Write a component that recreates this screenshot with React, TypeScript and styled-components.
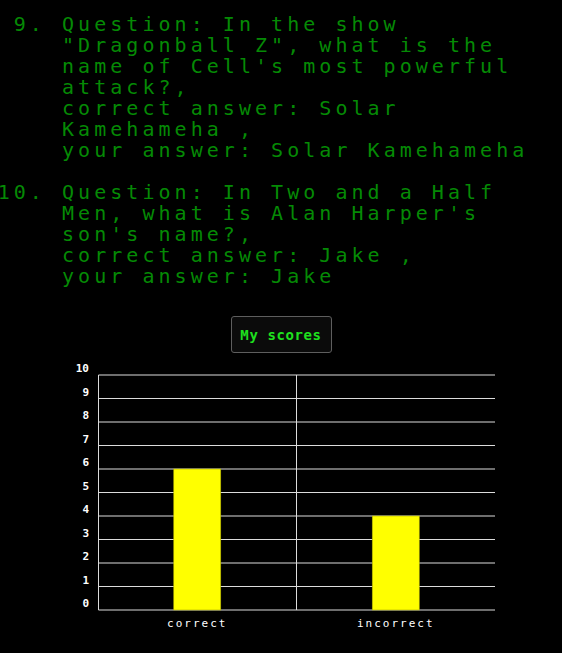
import styled, { createGlobalStyle } from 'styled-components'

const GlobalStyle = createGlobalStyle`
	html, body {
		margin: 0;
		padding: 0;
		background: #000;
	}
	body {
		font-family: 'DejaVu Sans Mono', 'Liberation Mono', monospace;
	}
`

const Page = styled.div`
	background: #000;
	min-height: 653px;
	display: flex;
	flex-direction: column;
	align-items: stretch;
`

const Results = styled.ol`
	margin: 14px 0 0;
	padding: 0 0 0 62px;
	color: #058a05;
	font-size: 20px;
	line-height: 21px;
	letter-spacing: 4.04px;
`

const Item = styled.li`
	margin-bottom: 21px;
	&:last-child {
		margin-bottom: 0;
	}
`

const ScoresButton = styled.button`
	align-self: center;
	margin-top: 29px;
	width: 101px;
	height: 37px;
	background: #0b0b0b;
	border: 1px solid #5e5e5e;
	border-radius: 3px;
	color: #1ee01e;
	font-family: 'DejaVu Sans Mono', monospace;
	font-weight: bold;
	font-size: 14px;
	letter-spacing: 0.6px;
	padding: 0;
	cursor: pointer;
`

const ChartBox = styled.div`
	margin-top: 7px;
	height: 280px;
	svg {
		display: block;
	}
`

interface Answer {
	question: string
	correct: string
	given: string
}

const answers: Answer[] = [
	{
		question: 'In the show "Dragonball Z", what is the name of Cell\'s most powerful attack?',
		correct: 'Solar Kamehameha',
		given: 'Solar Kamehameha',
	},
	{
		question: "In Two and a Half Men, what is Alan Harper's son's name?",
		correct: 'Jake',
		given: 'Jake',
	},
]

const scores = [
	{ label: 'correct', value: 6 },
	{ label: 'incorrect', value: 4 },
]

const Chart = () => {
	const top = 15
	const step = 23.5
	const left = 98.5
	const right = 495
	const bottom = top + step * 10
	const colW = (right - 98) / scores.length
	const ticks = Array.from({ length: 11 }, (_, i) => i)
	return (
		<svg width={562} height={280}>
			{ticks.map((t) => {
				const y = bottom - t * step
				return (
					<g key={t}>
						<line x1={left} x2={right} y1={y} y2={y} stroke="#dcdcdc" strokeWidth={1} />
						<text
							x={89}
							y={y - 3}
							textAnchor="end"
							fill="#fff"
							fontFamily="'DejaVu Sans Mono', monospace"
							fontWeight="bold"
							fontSize={11}
						>
							{t}
						</text>
					</g>
				)
			})}
			<line x1={left} x2={left} y1={top} y2={bottom} stroke="#dcdcdc" strokeWidth={1} />
			<line x1={296.5} x2={296.5} y1={top} y2={bottom} stroke="#dcdcdc" strokeWidth={1} />
			{scores.map((s, i) => {
				const cx = 98 + colW * i + colW / 2
				const h = s.value * step
				return (
					<g key={s.label}>
						<rect
							x={cx - 23.5}
							y={bottom - h}
							width={47}
							height={h}
							fill="#ffff00"
							stroke="#b0b000"
							strokeWidth={0.6}
						/>
						<text
							x={cx}
							y={267}
							textAnchor="middle"
							fill="#fff"
							fontFamily="'DejaVu Sans Mono', monospace"
							fontSize={11}
							letterSpacing={2}
						>
							{s.label}
						</text>
					</g>
				)
			})}
		</svg>
	)
}

const App = () => {
	return (
		<Page>
			<GlobalStyle />
			<Results start={9}>
				{answers.map((a) => (
					<Item key={a.question}>
						Question: {a.question},
						<br />
						correct answer: {a.correct} ,
						<br />
						your answer: {a.given}
					</Item>
				))}
			</Results>
			<ScoresButton>My scores</ScoresButton>
			<ChartBox>
				<Chart />
			</ChartBox>
		</Page>
	)
}

export default App
